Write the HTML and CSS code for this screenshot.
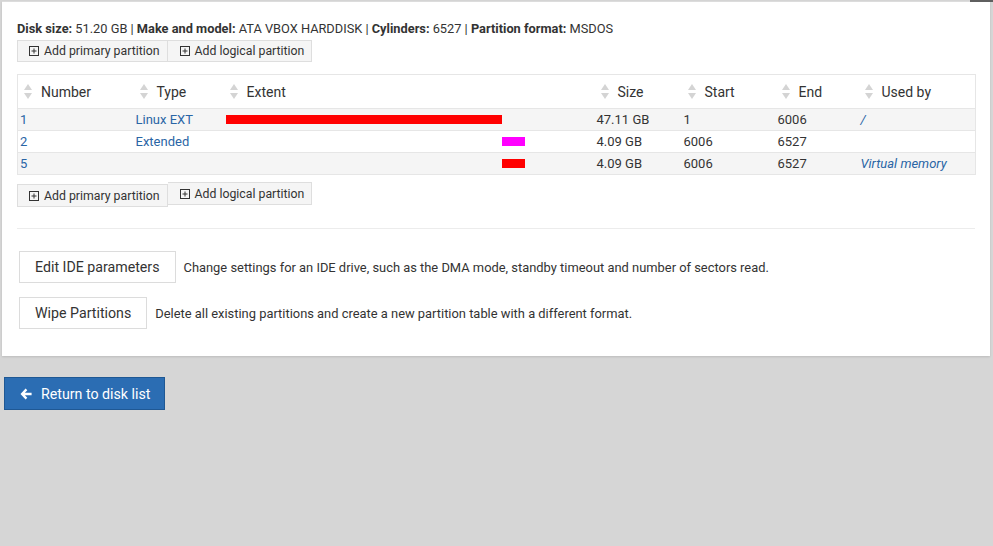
FILE: index.html
```html
<!DOCTYPE html>
<html>
<head>
<meta charset="utf-8">
<link rel="stylesheet" href="styles.css">
</head>
<body>
<div class="topstrip"></div>
<div class="panel">
  <div class="info"><b>Disk size:</b> 51.20 GB | <b>Make and model:</b> ATA VBOX HARDDISK | <b>Cylinders:</b> 6527 | <b>Partition format:</b> MSDOS</div>
  <div class="btnrow">
    <span class="sbtn"><svg class="plus" viewBox="0 0 10 10"><rect x="0.5" y="0.5" width="9" height="9" fill="none" stroke="#333"/><path d="M5 2.5v5M2.5 5h5" stroke="#333"/></svg>Add primary partition</span><span class="sbtn"><svg class="plus" viewBox="0 0 10 10"><rect x="0.5" y="0.5" width="9" height="9" fill="none" stroke="#333"/><path d="M5 2.5v5M2.5 5h5" stroke="#333"/></svg>Add logical partition</span>
  </div>
  <table class="parts">
    <colgroup><col style="width:116px"><col style="width:90px"><col style="width:371px"><col style="width:87px"><col style="width:94px"><col style="width:83px"><col style="width:117px"></colgroup>
    <thead>
      <tr>
        <th><i class="sort"></i>Number</th>
        <th><i class="sort"></i>Type</th>
        <th><i class="sort"></i>Extent</th>
        <th><i class="sort"></i>Size</th>
        <th><i class="sort"></i>Start</th>
        <th><i class="sort"></i>End</th>
        <th><i class="sort"></i>Used by</th>
      </tr>
    </thead>
    <tbody>
      <tr class="odd">
        <td><a>1</a></td><td><a>Linux EXT</a></td>
        <td><div class="extent"><span class="bar red" style="width:276px"></span></div></td>
        <td>47.11 GB</td><td>1</td><td>6006</td><td><a class="it">/</a></td>
      </tr>
      <tr>
        <td><a>2</a></td><td><a>Extended</a></td>
        <td><div class="extent"><span class="gap" style="width:276px"></span><span class="bar mag" style="width:23px"></span></div></td>
        <td>4.09 GB</td><td>6006</td><td>6527</td><td></td>
      </tr>
      <tr class="odd">
        <td><a>5</a></td><td></td>
        <td><div class="extent"><span class="gap" style="width:276px"></span><span class="bar red" style="width:23px"></span></div></td>
        <td>4.09 GB</td><td>6006</td><td>6527</td><td><a class="it">Virtual memory</a></td>
      </tr>
    </tbody>
  </table>
  <div class="btnrow btnrow2">
    <span class="sbtn low"><svg class="plus" viewBox="0 0 10 10"><rect x="0.5" y="0.5" width="9" height="9" fill="none" stroke="#333"/><path d="M5 2.5v5M2.5 5h5" stroke="#333"/></svg>Add primary partition</span><span class="sbtn"><svg class="plus" viewBox="0 0 10 10"><rect x="0.5" y="0.5" width="9" height="9" fill="none" stroke="#333"/><path d="M5 2.5v5M2.5 5h5" stroke="#333"/></svg>Add logical partition</span>
  </div>
  <div class="sep"></div>
  <div class="action">
    <span class="bbtn">Edit IDE parameters</span>
    <span class="desc">Change settings for an IDE drive, such as the DMA mode, standby timeout and number of sectors read.</span>
  </div>
  <div class="action">
    <span class="bbtn">Wipe Partitions</span>
    <span class="desc">Delete all existing partitions and create a new partition table with a different format.</span>
  </div>
</div>
<div class="footer">
  <span class="retbtn"><svg class="arrow" viewBox="0 0 12 12"><path d="M5.6 0.6 0.5 6l5.1 5.4 1.7-1.7-2.4-2.4H11.6V4.7H4.9l2.4-2.4z" fill="#fff"/></svg>Return to disk list</span>
</div>
</body>
</html>
```
FILE: styles.css
```css
html, body {
  margin: 0;
  padding: 0;
}
body {
  background: #d6d6d6;
  font-family: Roboto, "Liberation Sans", sans-serif;
  color: #333;
  font-size: 13px;
  position: relative;
  height: 546px;
  overflow: hidden;
}
.topstrip {
  position: absolute;
  top: 0;
  right: 0;
  width: 23px;
  height: 2px;
  background: #5f5f5f;
}
.panel {
  margin: 1px 3px 0 2px;
  background: #fff;
  border-top: 1px solid #dcdcdc;
  padding: 18px 15px 27px 15px;
  box-shadow: 0 1px 2px rgba(0,0,0,0.12);
}
.info {
  line-height: 18px;
  height: 18px;
  font-size: 12.8px;
}
.info b { font-weight: 700; }
.btnrow {
  display: flex;
  align-items: flex-start;
  margin-top: 2px;
  height: 22px;
}
.sbtn {
  display: inline-flex;
  align-items: center;
  height: 20px;
  line-height: 20px;
  background: #f5f5f5;
  border: 1px solid #dedede;
  padding: 0 7px 0 11px;
  white-space: nowrap;
  font-size: 12.3px;
}
.sbtn + .sbtn { border-left: 0; padding-left: 12px; }
.plus {
  width: 10px;
  height: 10px;
  margin-right: 5px;
}
.parts {
  margin-top: 12px;
  width: 958px;
  table-layout: fixed;
  border-collapse: collapse;
  border: 1px solid #e6e6e6;
}
.parts th {
  position: relative;
  height: 33px;
  padding: 0 0 0 23px;
  text-align: left;
  font-weight: 400;
  font-size: 14px;
  color: #333;
  border-bottom: 1px solid #e6e6e6;
}
.sort {
  position: absolute;
  left: 6px;
  top: 9px;
  width: 9px;
  height: 15px;
}
.sort::before, .sort::after {
  content: "";
  position: absolute;
  left: 0;
  border-left: 4.5px solid transparent;
  border-right: 4.5px solid transparent;
}
.sort::before {
  top: 0;
  border-bottom: 6.5px solid #d4d4d4;
}
.sort::after {
  bottom: 0;
  border-top: 6.5px solid #d4d4d4;
}
.parts td {
  height: 21px;
  padding: 0 0 0 2px;
  border-bottom: 1px solid #e6e6e6;
  white-space: nowrap;
  line-height: 21px;
}
.parts tr.odd td { background: #f5f5f5; }
.parts a { color: #2a65a5; text-decoration: none; }
.parts a.it { font-style: italic; }
.extent {
  display: flex;
  align-items: center;
  height: 21px;
}
.gap { display: block; height: 9px; }
.bar { display: block; height: 9px; }
.bar.red { background: #ff0000; }
.bar.mag { background: #ff00ff; }
.btnrow2 {
  margin-top: 7px;
  height: 25px;
}
.btnrow2 .sbtn { height: 21px; }
.btnrow2 .low { margin-top: 2px; }
.sep {
  margin-top: 21px;
  border-top: 1px solid #ececec;
}
.action {
  display: flex;
  align-items: center;
  margin-left: 2px;
}
.sep + .action { margin-top: 22px; }
.action + .action { margin-top: 14px; }
.bbtn {
  display: inline-block;
  height: 30px;
  line-height: 30px;
  border: 1px solid #dcdcdc;
  padding: 0 15px;
  font-size: 14.2px;
  color: #333;
  background: #fff;
}
.desc {
  margin-left: 8px;
  font-size: 12.9px;
}
.footer {
  padding: 21px 0 0 4px;
}
.retbtn {
  display: inline-flex;
  align-items: center;
  height: 31px;
  background: #2b6db3;
  border: 1px solid #1f5894;
  color: #fff;
  font-size: 14.2px;
  padding: 0 14px 0 15px;
}
.arrow {
  width: 12px;
  height: 12px;
  margin-right: 9px;
}
```
